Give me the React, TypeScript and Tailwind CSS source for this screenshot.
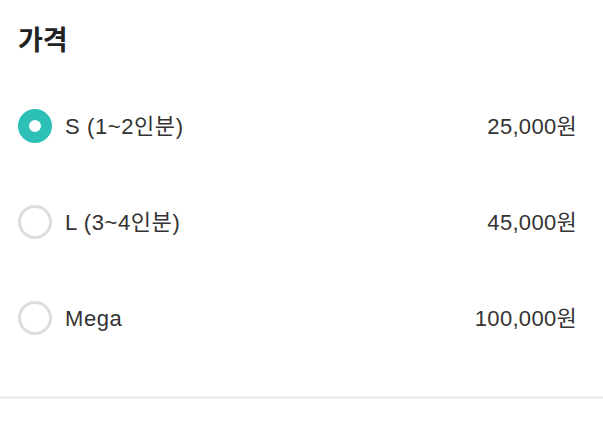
import { useState } from 'react';

const OPTIONS = [
  { id: 's', label: 'S (1~2인분)', price: '25,000원' },
  { id: 'l', label: 'L (3~4인분)', price: '45,000원' },
  { id: 'mega', label: 'Mega', price: '100,000원' },
];

export default function App() {
  const [selected, setSelected] = useState('s');

  return (
    <div
      className="w-[603px] h-[439px] bg-white overflow-hidden"
      style={{ fontFamily: '"Liberation Sans", "Noto Sans CJK KR", sans-serif' }}
    >
      <div className="pl-[18px] pr-[26px] pt-[22px]">
        <h2 className="text-[27px] font-bold leading-[38px] text-[#222]">가격</h2>

        <div className="mt-[49px] flex flex-col gap-[62px]">
          {OPTIONS.map((opt) => {
            const on = opt.id === selected;
            return (
              <label
                key={opt.id}
                className="flex h-[34px] items-center justify-between cursor-pointer"
                onClick={() => setSelected(opt.id)}
              >
                <span className="flex items-center gap-[13px]">
                  <span
                    className={
                      on
                        ? 'box-border h-[34px] w-[34px] rounded-full border-[11px] border-[#2cc0b6] bg-white'
                        : 'box-border h-[34px] w-[34px] rounded-full border-[3px] border-[#dddddd] bg-white'
                    }
                  />
                  <span className="text-[22px] tracking-[0.6px] text-[#333]">{opt.label}</span>
                </span>
                <span className="text-[22px] tracking-[0.3px] text-[#333]">{opt.price}</span>
              </label>
            );
          })}
        </div>
      </div>

      <div className="mt-[61px] h-[3px] w-full bg-[#eeeeee]" />
    </div>
  );
}
